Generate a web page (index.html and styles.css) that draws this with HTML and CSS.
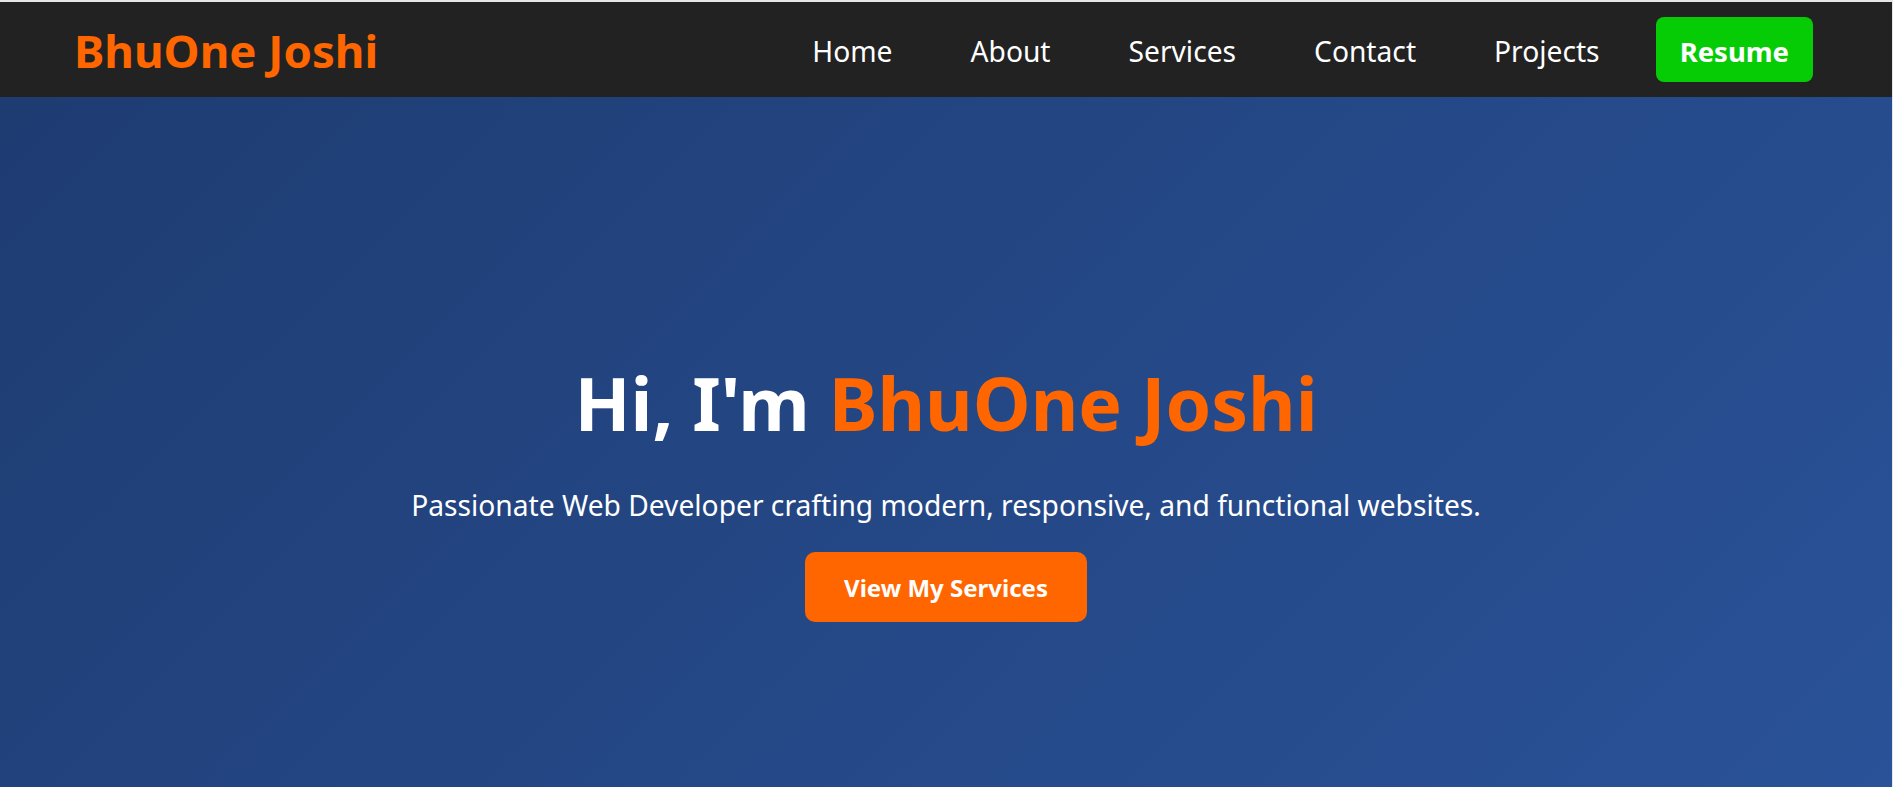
FILE: index.html
```html
<!DOCTYPE html>
<html lang="en">
<head>
<meta charset="utf-8">
<title>BhuOne Joshi</title>
<link rel="stylesheet" href="styles.css">
</head>
<body>
<div class="page">
  <header class="navbar">
    <div class="logo">BhuOne Joshi</div>
    <nav>
      <ul class="nav-links">
        <li><a href="#">Home</a></li>
        <li><a href="#">About</a></li>
        <li><a href="#">Services</a></li>
        <li><a href="#">Contact</a></li>
        <li><a href="#">Projects</a></li>
        <li><a href="#" class="resume-btn">Resume</a></li>
      </ul>
    </nav>
  </header>
  <section class="hero">
    <h1 class="hero-title">Hi, I'm <span class="accent">BhuOne Joshi</span></h1>
    <p class="hero-sub">Passionate Web Developer crafting modern, responsive, and functional websites.</p>
    <a href="#" class="cta-btn">View My Services</a>
  </section>
</div>
</body>
</html>
```

FILE: styles.css
```css
* { box-sizing: border-box; }

html, body {
  margin: 0;
  padding: 0;
  height: 100%;
  overflow: hidden;
}

body {
  background: #e6e6e6;
  font-family: "Noto Sans", "Open Sans", sans-serif;
}

.page {
  padding: 2px 1px 0 0;
  height: 100%;
  display: flex;
  flex-direction: column;
}

.navbar {
  height: 95px;
  flex: none;
  background: #222222;
  display: flex;
  align-items: center;
  justify-content: space-between;
  padding: 0 79px 0 74px;
}

.logo {
  color: #ff6600;
  font-weight: 700;
  font-size: 45.6px;
  line-height: 1;
  margin-top: 2px;
}

.nav-links {
  list-style: none;
  margin: 0;
  padding: 0;
  display: flex;
  align-items: center;
  gap: 56px;
}

.nav-links a {
  display: block;
  color: #ffffff;
  text-decoration: none;
  font-size: 28.2px;
  padding: 0 0 0 22px;
  margin-top: 3px;
}

.nav-links .resume-btn {
  background: #05cc05;
  color: #ffffff;
  font-weight: 700;
  height: 65px;
  padding: 3px 24px 0;
  margin-top: 0;
  border-radius: 8px;
  display: flex;
  align-items: center;
  font-size: 27.5px;
}

.hero {
  flex: 1;
  background: linear-gradient(135deg, #1e3c72, #2a5298);
  display: flex;
  flex-direction: column;
  align-items: center;
  padding-top: 262px;
  color: #ffffff;
  text-align: center;
}

.hero-title {
  margin: 0;
  font-size: 73.3px;
  line-height: 1.2;
  font-weight: 700;
}

.accent {
  color: #ff6600;
}

.hero-sub {
  margin: 37px 0 0;
  font-size: 28.2px;
  line-height: 1.5;
}

.cta-btn {
  margin-top: 26px;
  height: 70px;
  padding: 0 39.5px;
  display: inline-flex;
  align-items: center;
  background: #ff6600;
  color: #ffffff;
  text-decoration: none;
  font-weight: 700;
  font-size: 24px;
  border-radius: 10px;
}
```
